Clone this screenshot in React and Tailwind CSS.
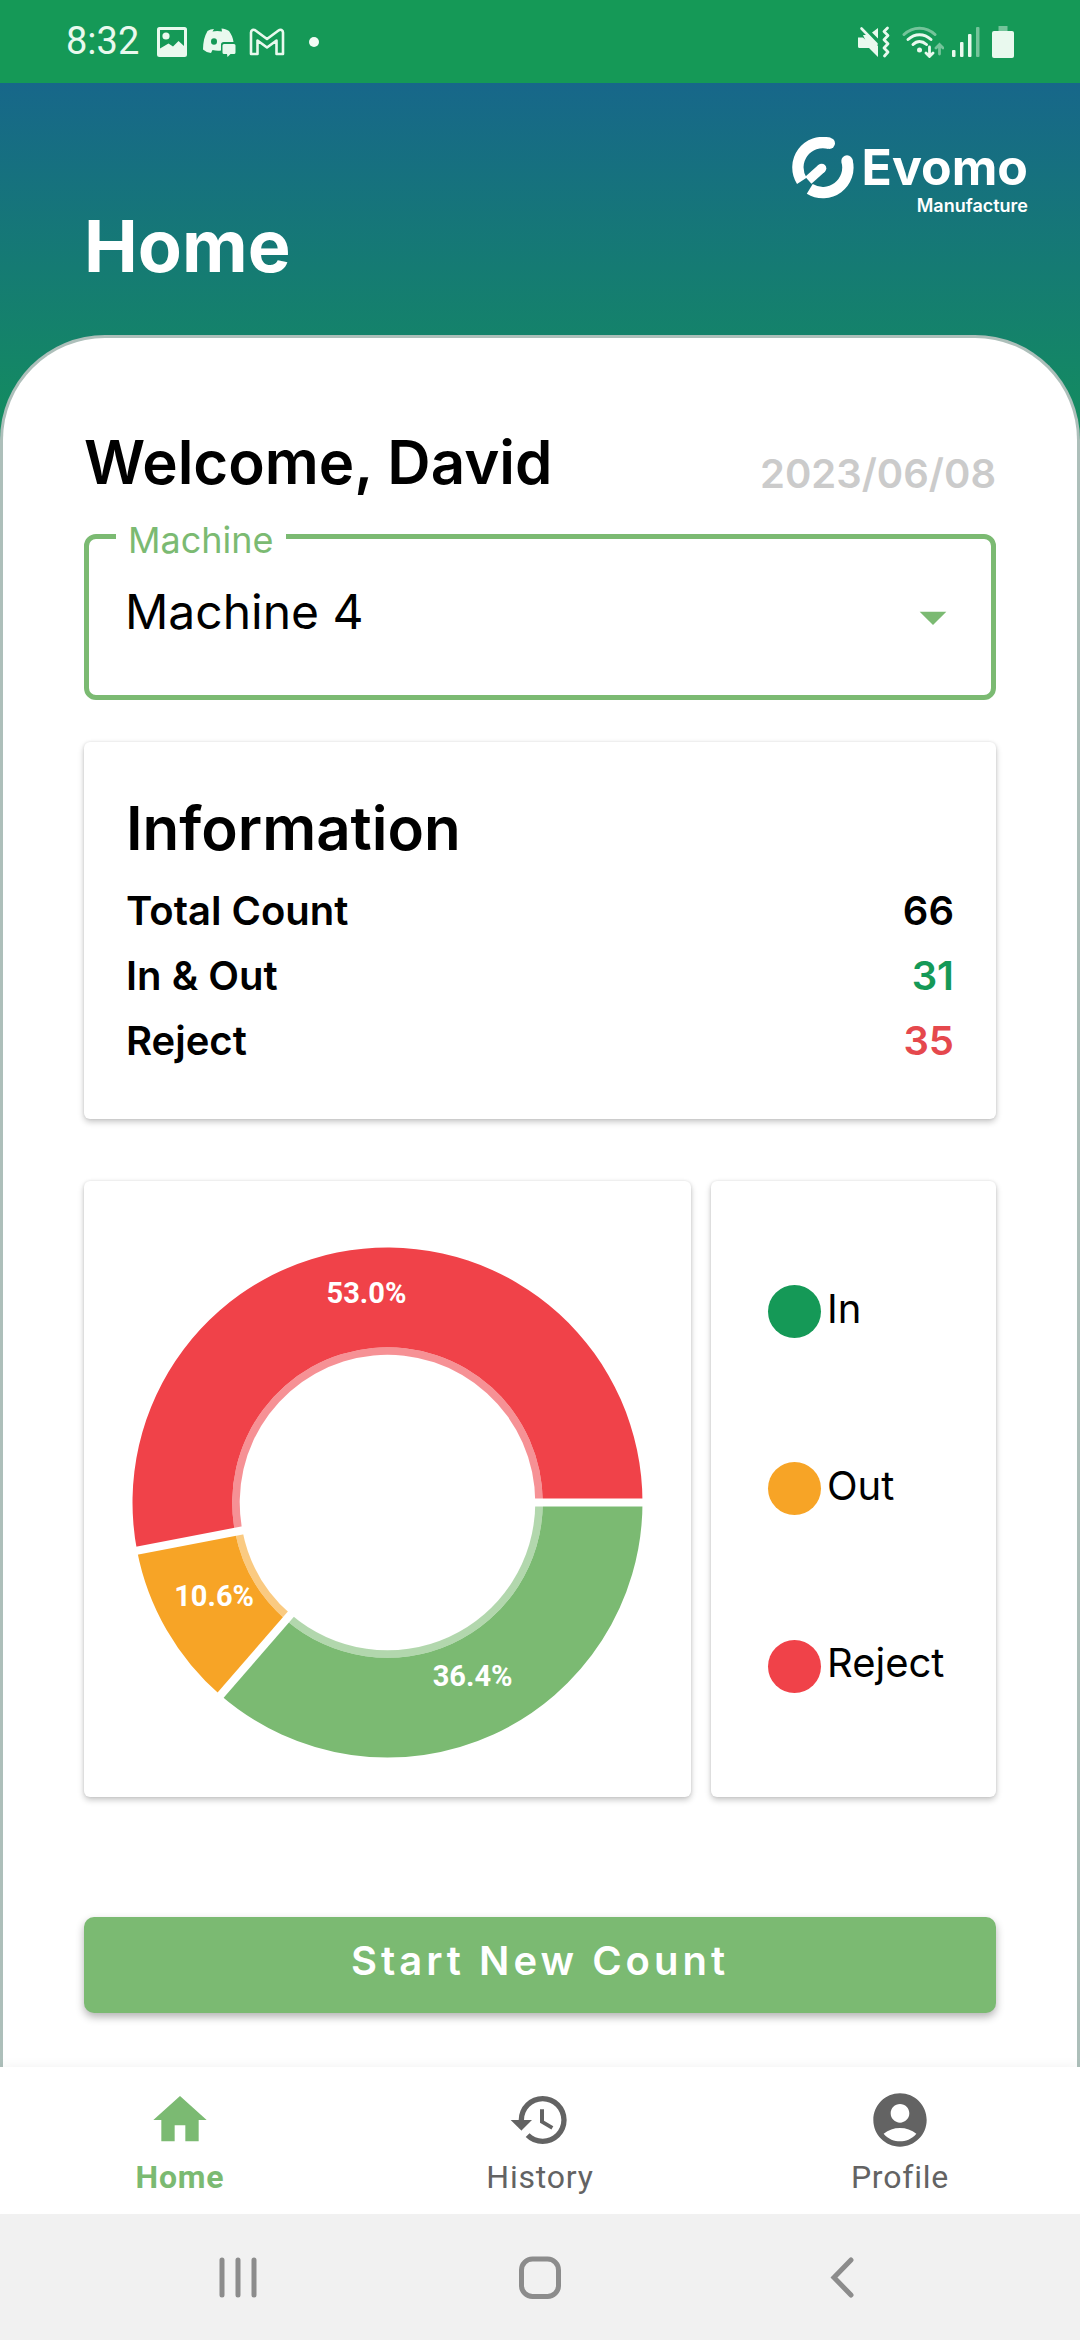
import { useState } from "react";
import { MdHome, MdHistory, MdAccountCircle, MdArrowDropDown } from "react-icons/md";

const MACHINES = ["Machine 1", "Machine 2", "Machine 3", "Machine 4"];

const TOTALS = [
  { label: "Total Count", value: 66, tone: "text-black" },
  { label: "In & Out", value: 31, tone: "text-[#159957]" },
  { label: "Reject", value: 35, tone: "text-[#e5484d]" },
];

const LEGEND = [
  { label: "In", dot: "bg-[#159957]" },
  { label: "Out", dot: "bg-[#f7a426]" },
  { label: "Reject", dot: "bg-[#f04249]" },
];

const SLICES = [
  { label: "36.4%", from: 0, to: 130.9, color: "#7bba72", x: 340, y: 428 },
  { label: "10.6%", from: 130.9, to: 169.1, color: "#f7a426", x: 82, y: 348 },
  { label: "53.0%", from: 169.1, to: 360, color: "#f04249", x: 234, y: 46 },
];

const TABS = [
  { label: "Home", Icon: MdHome, active: true },
  { label: "History", Icon: MdHistory, active: false },
  { label: "Profile", Icon: MdAccountCircle, active: false },
];

const CENTER = 255;

function polar(radius, degrees) {
  const a = (degrees * Math.PI) / 180;
  return [CENTER + radius * Math.cos(a), CENTER + radius * Math.sin(a)];
}

function ringPath(from, to, outer, inner) {
  const large = to - from > 180 ? 1 : 0;
  const [ax, ay] = polar(outer, from);
  const [bx, by] = polar(outer, to);
  const [cx, cy] = polar(inner, to);
  const [dx, dy] = polar(inner, from);
  return `M${ax} ${ay}A${outer} ${outer} 0 ${large} 1 ${bx} ${by}L${cx} ${cy}A${inner} ${inner} 0 ${large} 0 ${dx} ${dy}Z`;
}

function DonutChart() {
  return (
    <svg viewBox="0 0 510 510" className="w-full" role="img" aria-label="Count breakdown">
      {SLICES.map((s) => (
        <g key={s.label} fill={s.color}>
          <path d={ringPath(s.from, s.to, 254.5, 155)} />
          <path d={ringPath(s.from, s.to, 155, 147.5)} fillOpacity="0.58" />
        </g>
      ))}
      {SLICES.map((s) => {
        const [x1, y1] = polar(140, s.from);
        const [x2, y2] = polar(262, s.from);
        return <line key={s.label} x1={x1} y1={y1} x2={x2} y2={y2} stroke="#fff" strokeWidth="8" />;
      })}
      {SLICES.map((s) => (
        <text
          key={s.label}
          x={s.x}
          y={s.y}
          textAnchor="middle"
          dominantBaseline="central"
          className="fill-white font-['Roboto',sans-serif] text-[29px] font-bold"
        >
          {s.label}
        </text>
      ))}
    </svg>
  );
}

function StatusBar() {
  return (
    <div className="flex h-[83px] items-center justify-between bg-[#159957] pr-[66px] pl-[66px] font-['Roboto',sans-serif] text-[#e9f9ee]">
      <div className="flex items-center">
        <span className="text-[38px]">8:32</span>
        <svg viewBox="0 0 30 30" className="ml-[18px] h-[30px] w-[30px]" aria-hidden="true">
          <path
            fill="currentColor"
            fillRule="evenodd"
            d="M2.5 0h25A2.5 2.5 0 0 1 30 2.5v25a2.5 2.5 0 0 1-2.5 2.5h-25A2.5 2.5 0 0 1 0 27.500v-25A2.500 2.500 0 0 1 2.500 0zM3 3v18.500l8.500-5 4.500 3 5.500-5.500 5.500 5V3z"
          />
          <circle cx="9" cy="9" r="3.600" fill="currentColor" />
        </svg>
        <svg viewBox="0 0 34 30" className="ml-4 h-[30px] w-[34px]" aria-hidden="true">
          <path
            fill="currentColor"
            d="M11 2 9.500 4.500c3-.7 6.500-.7 9.500 0L18.500 1.500c2.500.2 5 1 7.500 2.500 2.600 3.500 4 7 4.500 11h-9.700a2.800 2.800 0 0 0-2.800 2.800v5.700c-2.500.5-5.500.3-8.500-.5L8 26c-3-.3-5.500-1.500-8-3.500C0 15 1.500 9 4.500 4 6.500 2.700 8.700 2 11 2z"
          />
          <ellipse cx="11" cy="14.500" rx="3" ry="3.300" fill="#159957" />
          <path fill="currentColor" d="M21 17h10a1.500 1.500 0 0 1 1.500 1.500v7A1.500 1.500 0 0 1 31 27h-3.500L24.500 30 24 27h-3a1.500 1.500 0 0 1-1.500-1.500v-7A1.500 1.500 0 0 1 21 17z" />
        </svg>
        <svg viewBox="0 0 36 28" className="ml-3 h-7 w-9" aria-hidden="true">
          <path
            fill="none"
            stroke="currentColor"
            strokeWidth="2.600"
            strokeLinejoin="round"
            d="M2 4.500C2 2 4.500 1 6.500 2.500L18 11 29.500 2.500C31.500 1 34 2 34 4.500V26h-6.500V12.500L18 19.500l-9.500-7V26H2z"
          />
        </svg>
        <span className="ml-6 h-[10px] w-[10px] rounded-full bg-[#f1fbf4]" />
      </div>
      <div className="flex items-center">
        <svg viewBox="0 0 32 32" className="h-8 w-8" aria-hidden="true">
          <path fill="currentColor" d="M0 11.500h5L20 25.500V31L11 22H1.500A1.500 1.500 0 0 1 0 20.500zM20 2v10.500L14 6.500z" />
          <path fill="currentColor" d="M5 9h4l11 11v10L10 20z" />
          <path stroke="currentColor" strokeWidth="2.600" strokeLinecap="round" d="M3.500 2.500 18.500 18" />
          <path
            fill="none"
            stroke="currentColor"
            strokeWidth="2.800"
            strokeLinecap="round"
            strokeLinejoin="round"
            d="M29.500 2 26 5.500l4 4-4 4.200 4 4-4 4.300 4 4-3.500 4"
          />
        </svg>
        <svg viewBox="0 0 42 32" className="ml-3 h-8 w-[42px]" fill="none" stroke="currentColor" strokeLinecap="round" aria-hidden="true">
          <path strokeWidth="3" strokeOpacity="0.450" d="M2 8.500C11 0 24 0 33 8.500" />
          <path strokeWidth="3" d="M6 13.500c7-6.500 16-6.500 23 0" />
          <path strokeWidth="3" d="M11 18.500c4-4 9-4 13.500 0" />
          <circle cx="17.500" cy="24" r="2.500" fill="currentColor" stroke="none" />
          <path strokeWidth="2.800" d="M27.500 21v9M24 27l3.500 3.500L31 27" />
          <path strokeWidth="2.800" strokeOpacity="0.450" d="M37.500 28v-9M34 22l3.500-3.500L41 22" />
        </svg>
        <svg viewBox="0 0 28 30" className="ml-2 h-[30px] w-7" fill="currentColor" aria-hidden="true">
          <rect x="0" y="23" width="3.500" height="7" rx="1" />
          <rect x="8" y="15" width="3.500" height="15" rx="1" />
          <rect x="16" y="7" width="3.500" height="23" rx="1" />
          <rect x="24" y="0" width="3.500" height="30" rx="1" opacity="0.450" />
        </svg>
        <svg viewBox="0 0 22 34" className="ml-3 h-[34px] w-[22px]" fill="currentColor" aria-hidden="true">
          <rect x="6.500" y="1" width="9" height="6" opacity="0.450" />
          <rect x="0" y="6" width="22" height="27" rx="2" />
        </svg>
      </div>
    </div>
  );
}

function BrandMark() {
  return (
    <svg viewBox="0 0 184 186" className="h-[62px] w-[62px]" aria-hidden="true">
      <g fill="none" stroke="#fff">
        <path strokeWidth="34" d="M111 19A75 75 0 0 0 28.400 131.700" />
        <path strokeWidth="34" d="M164 72A75 75 0 0 1 52.300 155.600" />
        <path strokeWidth="28" d="M48 130 88 94" />
      </g>
      <g fill="#fff">
        <circle cx="111" cy="19" r="17" />
        <circle cx="164" cy="72" r="17" />
        <circle cx="88" cy="94" r="14" />
      </g>
    </svg>
  );
}

function Header() {
  return (
    <header className="flex h-[252px] items-start justify-between pr-[52px] pl-[84px] text-white">
      <h1 className="pt-[118px] text-[72px] leading-[90px] font-bold">Home</h1>
      <div className="flex gap-2 pt-[54px]">
        <BrandMark />
        <div className="flex flex-col items-end">
          <span className="text-[50px] leading-[60px] font-bold">Evomo</span>
          <span className="text-[18px] leading-[18px] font-semibold">Manufacture</span>
        </div>
      </div>
    </header>
  );
}

const cardClass = "rounded-[6px] bg-white shadow-[0_3px_6px_rgba(0,0,0,0.22),0_0_3px_rgba(0,0,0,0.10)]";

export default function App() {
  const [machine, setMachine] = useState("Machine 4");

  return (
    <div className="flex min-h-screen flex-col bg-white font-['Inter',sans-serif] text-black">
      <StatusBar />
      <div className="flex flex-1 flex-col bg-[linear-gradient(#17678a,#138f5c_370px)]">
        <Header />
        <main className="flex flex-1 flex-col rounded-t-[105px] border-3 border-b-0 border-[#adbfba] bg-white px-[81px] pt-[88px] pb-[54px]">
          <div className="flex items-end justify-between">
            <h2 className="text-[60px] leading-[72px] font-semibold">Welcome, David</h2>
            <time dateTime="2023-06-08" className="text-[40px] leading-[48px] font-semibold text-[#cbcbcb]">
              2023/06/08
            </time>
          </div>

          <div className="relative mt-9 rounded-[12px] border-[5px] border-[#7bba72]">
            <label
              htmlFor="machine"
              className="absolute -top-[15px] left-[27px] bg-white px-3 text-[36px] leading-8 text-[#7bba72]"
            >
              Machine
            </label>
            <select
              id="machine"
              value={machine}
              onChange={(e) => setMachine(e.target.value)}
              className="block h-[156px] w-full appearance-none bg-transparent px-9 pb-[10px] text-[48px] outline-none"
            >
              {MACHINES.map((m) => (
                <option key={m}>{m}</option>
              ))}
            </select>
            <MdArrowDropDown
              aria-hidden="true"
              className="pointer-events-none absolute top-[46px] right-[26px] h-[64px] w-[64px] text-[#7bba72]"
            />
          </div>

          <section className={`mt-[42px] px-[42px] pt-[50px] pb-[46px] ${cardClass}`}>
            <h2 className="text-[60px] leading-[72px] font-semibold">Information</h2>
            <dl className="mt-[14px] text-[40px] leading-[65px] font-semibold">
              {TOTALS.map((t) => (
                <div key={t.label} className="flex justify-between">
                  <dt>{t.label}</dt>
                  <dd className={t.tone}>{t.value}</dd>
                </div>
              ))}
            </dl>
          </section>

          <section className="mt-[62px] grid grid-cols-[607fr_285fr] gap-5">
            <div className={`flex items-center px-[48px] pt-[66px] pb-[39px] ${cardClass}`}>
              <DonutChart />
            </div>
            <ul className={`flex flex-col justify-around py-[42px] pl-[57px] ${cardClass}`}>
              {LEGEND.map((l) => (
                <li key={l.label} className="flex items-center gap-1.5">
                  <span className={`h-[53px] w-[53px] rounded-full ${l.dot}`} />
                  <span className="pb-1.5 text-[40px] leading-[48px]">{l.label}</span>
                </li>
              ))}
            </ul>
          </section>

          <button
            type="button"
            className="mt-auto h-24 w-full rounded-[10px] bg-[#7bba72] pb-2 text-[40px] font-semibold tracking-widest text-white shadow-[0_4px_8px_rgba(0,0,0,0.3)]"
          >
            Start New Count
          </button>
        </main>
      </div>

      <nav className="z-10 grid h-[147px] grid-cols-3 bg-white font-['Roboto',sans-serif] text-[32px] leading-10 text-[#636363] shadow-[0_0_12px_rgba(0,0,0,0.06)]">
        {TABS.map(({ label, Icon, active }) => (
          <a
            key={label}
            href={`#${label.toLowerCase()}`}
            aria-current={active ? "page" : undefined}
            className={
              active
                ? "flex flex-col items-center pt-[21px] font-bold text-[#7bba72]"
                : "flex flex-col items-center pt-[21px]"
            }
          >
            <Icon className="h-[64px] w-[64px]" aria-hidden="true" />
            <span className="mt-[5px] tracking-wide">{label}</span>
          </a>
        ))}
      </nav>

      <div className="z-10 grid h-[126px] grid-cols-3 bg-[#f1f1f1] px-[87px] text-[#8c8c8c]">
        <button type="button" aria-label="Recent apps" className="grid place-items-center">
          <svg viewBox="0 0 44 44" className="h-11 w-11" stroke="currentColor" strokeWidth="5" strokeLinecap="round">
            <path d="M6 5v35M22 5v35M38 5v35" />
          </svg>
        </button>
        <button type="button" aria-label="Home screen" className="grid place-items-center">
          <svg viewBox="0 0 44 44" className="h-11 w-11" fill="none" stroke="currentColor" strokeWidth="5">
            <rect x="3.500" y="4" width="37" height="37.500" rx="11" />
          </svg>
        </button>
        <button type="button" aria-label="Back" className="grid place-items-center">
          <svg viewBox="0 0 44 44" className="h-11 w-11" fill="none" stroke="currentColor" strokeWidth="5" strokeLinecap="round">
            <path d="M31 5 14 22.500 31 40" />
          </svg>
        </button>
      </div>
    </div>
  );
}
